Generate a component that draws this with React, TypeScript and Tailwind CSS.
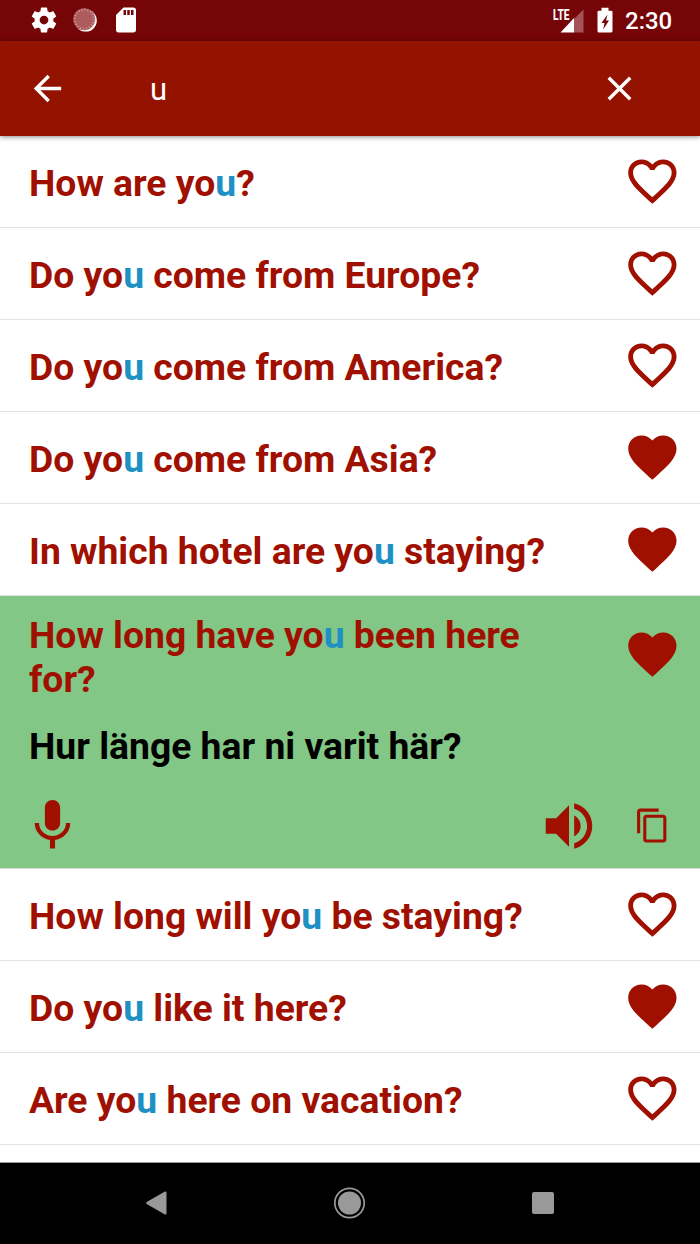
import type { ReactNode } from "react";

interface Phrase {
  id: number;
  text: string;
  translation?: string;
  favorite: boolean;
}

const phrases: Phrase[] = [
  { id: 1, text: "How are you?", favorite: false },
  { id: 2, text: "Do you come from Europe?", favorite: false },
  { id: 3, text: "Do you come from America?", favorite: false },
  { id: 4, text: "Do you come from Asia?", favorite: true },
  { id: 5, text: "In which hotel are you staying?", favorite: true },
  {
    id: 6,
    text: "How long have you been here for?",
    translation: "Hur länge har ni varit här?",
    favorite: true,
  },
  { id: 7, text: "How long will you be staying?", favorite: false },
  { id: 8, text: "Do you like it here?", favorite: true },
  { id: 9, text: "Are you here on vacation?", favorite: false },
];

function Icon({ className, children }: { className: string; children: ReactNode }) {
  return (
    <svg viewBox="0 0 24 24" fill="currentColor" className={`shrink-0 ${className}`}>
      {children}
    </svg>
  );
}

function HeartIcon({ filled }: { filled: boolean }) {
  return (
    <svg viewBox="-0.15 -0.1 24 24" fill="currentColor" className="size-[58px] shrink-0">
      {filled ? (
        <path d="M12 21.35l-1.45-1.32C5.4 15.36 2 12.28 2 8.5 2 5.42 4.42 3 7.5 3c1.74 0 3.41.81 4.5 2.09C13.09 3.81 14.76 3 16.5 3 19.58 3 22 5.42 22 8.5c0 3.78-3.4 6.86-8.55 11.54L12 21.35z" />
      ) : (
        <path d="M16.5 3c-1.74 0-3.41.81-4.5 2.09C10.91 3.81 9.24 3 7.5 3 4.42 3 2 5.42 2 8.5c0 3.78 3.4 6.86 8.55 11.54L12 21.35l1.45-1.32C18.6 15.36 22 12.28 22 8.5 22 5.42 19.58 3 16.5 3zm-4.4 15.55l-.1.1-.1-.1C7.14 14.24 4 11.39 4 8.5 4 6.5 5.5 5 7.5 5c1.54 0 3.04.99 3.57 2.36h1.87C13.46 5.99 14.96 5 16.5 5c2 0 3.5 1.5 3.5 3.5 0 2.89-3.14 5.74-7.9 10.05z" />
      )}
    </svg>
  );
}

// Marks the first match of the search term in the phrase
function Highlighted({ text, query }: { text: string; query: string }) {
  const index = text.indexOf(query);
  if (index < 0) return <>{text}</>;
  return (
    <>
      {text.slice(0, index)}
      <span className="text-[#1e90c3]">{query}</span>
      {text.slice(index + query.length)}
    </>
  );
}

function StatusBar() {
  return (
    <div className="flex h-[41px] items-center justify-between bg-[#750507] pr-[27px] pb-px pl-[29px] text-white">
      <div className="flex items-center">
        <Icon className="size-[30px]">
          <path d="M19.43 12.98c.04-.32.07-.64.07-.98s-.03-.66-.07-.98l2.11-1.65c.19-.15.24-.42.12-.64l-2-3.46c-.12-.22-.39-.3-.61-.22l-2.49 1c-.52-.4-1.08-.73-1.69-.98l-.38-2.65C14.46 2.18 14.25 2 14 2h-4c-.25 0-.46.18-.49.42l-.38 2.65c-.61.25-1.17.59-1.69.98l-2.49-1c-.23-.09-.49 0-.61.22l-2 3.46c-.13.22-.07.49.12.64l2.11 1.65c-.04.32-.07.65-.07.98s.03.66.07.98l-2.11 1.65c-.19.15-.24.42-.12.64l2 3.46c.12.22.39.3.61.22l2.49-1c.52.4 1.08.73 1.69.98l.38 2.65c.03.24.24.42.49.42h4c.25 0 .46-.18.49-.42l.38-2.65c.61-.25 1.17-.59 1.69-.98l2.49 1c.23.09.49 0 .61-.22l2-3.46c.12-.22.07-.49-.12-.64l-2.11-1.65zM12 15.5c-1.93 0-3.5-1.57-3.5-3.5s1.57-3.5 3.5-3.5 3.5 1.57 3.5 3.5-1.57 3.5-3.5 3.5z" />
        </Icon>
        <Icon className="ml-[14px] size-6">
          <circle cx="12.8" cy="12.6" r="11" fill="#fff" />
          <circle cx="11.2" cy="11.2" r="11" fill="#ad5b5d" />
          <circle cx="11.2" cy="11.2" r="9.6" fill="none" stroke="#cf9b9c" strokeWidth="2" strokeDasharray="1 2.015" />
        </Icon>
        <Icon className="ml-[14px] size-[30px]">
          <path d="M18 2h-8L4.02 8 4 20c0 1.1.9 2 2 2h12c1.1 0 2-.9 2-2V4c0-1.1-.9-2-2-2zm-6 6h-2V4h2v4zm3 0h-2V4h2v4zm3 0h-2V4h2v4z" />
        </Icon>
      </div>
      <div className="flex items-center">
        <div className="mb-[10px] w-[17px]">
          <span className="block origin-left scale-x-[0.68] text-[15px] leading-[14px] font-extrabold">LTE</span>
        </div>
        <svg viewBox="0 0 24 26" className="-ml-[10px] h-[26px] w-6">
          <path d="M14 12L23.5 2.5V25.5H14z" fill="#a45456" />
          <path d="M14 11V25.5H.5z" fill="#fff" />
        </svg>
        <svg viewBox="0 0 16 26" className="ml-[13px] h-[26px] w-4">
          <path d="M4.5 .8h7v3h2.7q1.3 0 1.3 1.3v19q0 1.300-1.300 1.300H1.800q-1.300 0-1.300-1.300v-19q0-1.300 1.300-1.300H4.500z" fill="#fff" />
          <path d="M10.500 7.500L4.500 16h3l-1.300 6.500L12 13.500H9z" fill="#750507" />
        </svg>
        <span className="ml-3 w-12 pt-px text-[24px] leading-none font-medium">2:30</span>
      </div>
    </div>
  );
}

function SearchBar({ query }: { query: string }) {
  return (
    <header className="relative z-10 flex h-[95px] items-center bg-[#941200] pr-[60px] pl-[27px] text-white shadow-[0_1px_5px_rgba(0,0,0,0.45)]">
      <Icon className="size-[41px]">
        <path d="M20 11H7.830l5.590-5.590L12 4l-8 8 8 8 1.410-1.410L7.830 13H20v-2z" />
      </Icon>
      <span className="ml-[82px] grow pt-0.5 text-[31px] leading-none">{query}</span>
      <Icon className="size-[41px]">
        <path d="M19 6.410L17.590 5 12 10.590 6.410 5 5 6.410 10.590 12 5 17.590 6.410 19 12 13.410 17.590 19 19 17.590 13.410 12z" />
      </Icon>
    </header>
  );
}

function PhraseRow({ phrase, query }: { phrase: Phrase; query: string }) {
  return (
    <li className="flex h-[92px] items-center justify-between border-b border-[#e2e2e2] pr-[19px] pb-px pl-[29px]">
      <p className="pt-[3px]">
        <Highlighted text={phrase.text} query={query} />
      </p>
      <HeartIcon filled={phrase.favorite} />
    </li>
  );
}

function ExpandedRow({ phrase, query }: { phrase: Phrase; query: string }) {
  return (
    <li className="h-[273px] border-b border-[#d5ded5] bg-[#82c785] pt-[17px] pr-[19px] pl-[29px]">
      <div className="flex items-center justify-between">
        <p className="w-[520px]">
          <Highlighted text={phrase.text} query={query} />
        </p>
        <div className="pb-[6px]">
          <HeartIcon filled={phrase.favorite} />
        </div>
      </div>
      <p className="mt-[23px] text-black">{phrase.translation}</p>
      <div className="-ml-[7px] mt-[27px] flex items-start pr-[10px]">
        <Icon className="size-[61px]">
          <path d="M12 14c1.660 0 2.990-1.340 2.990-3L15 5c0-1.660-1.340-3-3-3S9 3.340 9 5v6c0 1.660 1.340 3 3 3zm5.300-3c0 3-2.540 5.100-5.300 5.100S6.700 14 6.700 11H5c0 3.410 2.720 6.230 6 6.720V21h2v-3.280c3.280-.48 6-3.300 6-6.720h-1.700z" />
        </Icon>
        <Icon className="ml-auto size-[62px]">
          <path d="M3 9v6h4l5 5V4L7 9H3zm13.500 3c0-1.770-1.020-3.290-2.500-4.030v8.050c1.480-.73 2.500-2.250 2.500-4.020zM14 3.230v2.060c2.890.86 5 3.540 5 6.710s-2.110 5.850-5 6.710v2.060c4.010-.91 7-4.490 7-8.770s-2.990-7.860-7-8.770z" />
        </Icon>
        <Icon className="mt-3 ml-[34px] size-[37px]">
          <path d="M16 1H4c-1.100 0-2 .9-2 2v14h2V3h12V1zm3 4H8c-1.100 0-2 .9-2 2v14c0 1.100.9 2 2 2h11c1.100 0 2-.9 2-2V7c0-1.100-.9-2-2-2zm0 16H8V7h11v14z" />
        </Icon>
      </div>
    </li>
  );
}

function NavigationBar() {
  return (
    <nav className="flex h-[82px] shrink-0 items-center justify-between border-t border-[#999] bg-black pr-[146px] pb-[2px] pl-[145px] text-[#999]">
      <svg viewBox="0 0 22 24" fill="currentColor" className="h-6 w-[22px]">
        <path d="M1.700 11.100L19.500.8q2-.8 2 1v20.400q0 1.800-2 1L1.700 12.900q-1.300-.9 0-1.800z" />
      </svg>
      <svg viewBox="0 0 32 32" fill="currentColor" className="size-8">
        <circle cx="15.500" cy="16" r="14.700" fill="none" stroke="currentColor" strokeWidth="1.700" />
        <circle cx="15.500" cy="16" r="11.500" />
      </svg>
      <div className="size-[22px] rounded-[2px] bg-[#999]" />
    </nav>
  );
}

export default function App() {
  const query = "u";

  return (
    <div className="flex h-[1244px] w-[700px] flex-col overflow-hidden bg-white font-['Roboto',sans-serif]">
      <StatusBar />
      <SearchBar query={query} />
      <ul className="grow text-[37.3px] leading-[44px] font-bold text-[#a01000]">
        {phrases.map((phrase) =>
          phrase.translation ? (
            <ExpandedRow key={phrase.id} phrase={phrase} query={query} />
          ) : (
            <PhraseRow key={phrase.id} phrase={phrase} query={query} />
          ),
        )}
      </ul>
      <NavigationBar />
    </div>
  );
}
